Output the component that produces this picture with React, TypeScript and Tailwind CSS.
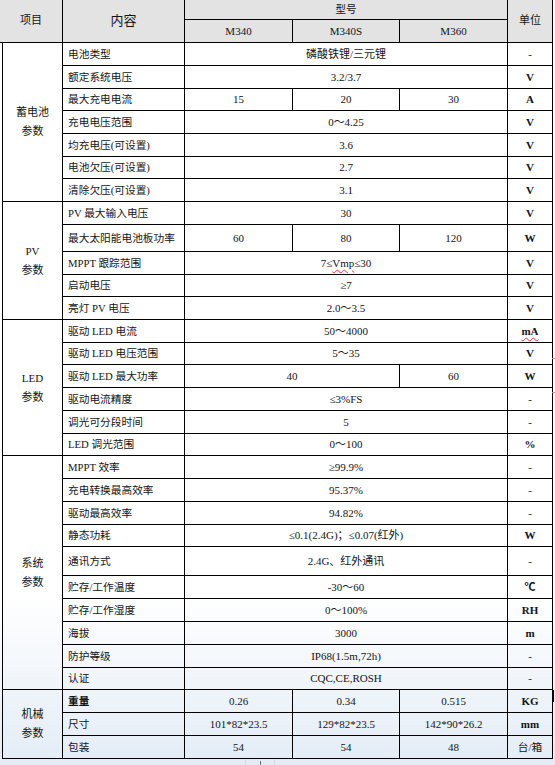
import React from "react";

const cell = "flex items-center justify-center border-r border-b border-black text-center whitespace-nowrap";
const font = "font-['Liberation_Serif','Noto_Sans_CJK_SC',serif]";

function C({ children, className = "" }: { children?: React.ReactNode; className?: string }) {
  return <div className={`${cell} ${className}`}>{children}</div>;
}

function Label({ children, bold = false }: { children: React.ReactNode; bold?: boolean }) {
  return (
    <div
      className={`flex items-center justify-start border-r border-b border-black pl-[5px] whitespace-nowrap text-[10.7px] ${
        bold ? "font-bold" : ""
      }`}
    >
      {children}
    </div>
  );
}

function Unit({ children }: { children: React.ReactNode }) {
  return <div className={`${cell} font-bold text-[11px]`}>{children}</div>;
}

function Section({ lines, className }: { lines: [string, string]; className: string }) {
  return (
    <div
      className={`ml-[2px] flex flex-col items-center justify-center border-l border-r border-b border-black text-[11px] leading-[19px] ${className}`}
    >
      <span>{lines[0]}</span>
      <span>{lines[1]}</span>
    </div>
  );
}

export default function App() {
  return (
    <div className="relative w-[555px] h-[765px] overflow-hidden bg-gradient-to-b from-white from-[78%] to-[#e3ecf6] text-[#141414]">
      <div
        className={`grid w-fit ${font} text-[11px] grid-cols-[63px_122px_108px_107px_108px_45px] grid-rows-[20px_23px_23px_23px_22px_23px_23px_22px_23px_23px_27px_23px_22px_23px_23px_22px_23px_23px_23px_22px_23px_23px_23px_22px_29px_23px_23px_23px_23px_22px_23px_23px_23px]`}
      >
        {/* header */}
        <C className="row-span-2 bg-[#e3e3e3] text-[11px] pb-[2px]">项目</C>
        <C className="row-span-2 bg-[#e3e3e3] text-[13px]">内容</C>
        <C className="col-span-3 bg-[#e3e3e3] text-[10.5px]">型号</C>
        <C className="row-span-2 bg-[#e3e3e3] text-[11px] pb-[2px]">单位</C>
        <C className="bg-[#e3e3e3]">M340</C>
        <C className="bg-[#e3e3e3]">M340S</C>
        <C className="bg-[#e3e3e3]">M360</C>

        {/* battery */}
        <Section lines={["蓄电池", "参数"]} className="row-span-7" />
        <Label>电池类型</Label>
        <C className="col-span-3">磷酸铁锂/三元锂</C>
        <C>-</C>
        <Label>额定系统电压</Label>
        <C className="col-span-3">3.2/3.7</C>
        <Unit>V</Unit>
        <Label>最大充电电流</Label>
        <C>15</C>
        <C>20</C>
        <C>30</C>
        <Unit>A</Unit>
        <Label>充电电压范围</Label>
        <C className="col-span-3">0～4.25</C>
        <Unit>V</Unit>
        <Label>均充电压(可设置)</Label>
        <C className="col-span-3">3.6</C>
        <Unit>V</Unit>
        <Label>电池欠压(可设置)</Label>
        <C className="col-span-3">2.7</C>
        <Unit>V</Unit>
        <Label>清除欠压(可设置)</Label>
        <C className="col-span-3">3.1</C>
        <Unit>V</Unit>

        {/* PV */}
        <Section lines={["PV", "参数"]} className="row-span-5" />
        <Label>PV 最大输入电压</Label>
        <C className="col-span-3">30</C>
        <Unit>V</Unit>
        <Label>最大太阳能电池板功率</Label>
        <C>60</C>
        <C>80</C>
        <C>120</C>
        <Unit>W</Unit>
        <Label>MPPT 跟踪范围</Label>
        <C className="col-span-3">
          7≤<span className="underline decoration-wavy decoration-red-500 decoration-1 underline-offset-2">Vmp</span>≤30
        </C>
        <Unit>V</Unit>
        <Label>启动电压</Label>
        <C className="col-span-3">≥7</C>
        <Unit>V</Unit>
        <Label>亮灯 PV 电压</Label>
        <C className="col-span-3">2.0～3.5</C>
        <Unit>V</Unit>

        {/* LED */}
        <Section lines={["LED", "参数"]} className="row-span-6" />
        <Label>驱动 LED 电流</Label>
        <C className="col-span-3">50～4000</C>
        <Unit>
          <span className="underline decoration-wavy decoration-red-500 decoration-1 underline-offset-2">mA</span>
        </Unit>
        <Label>驱动 LED 电压范围</Label>
        <C className="col-span-3">5～35</C>
        <Unit>V</Unit>
        <Label>驱动 LED 最大功率</Label>
        <C className="col-span-2">40</C>
        <C>60</C>
        <Unit>W</Unit>
        <Label>驱动电流精度</Label>
        <C className="col-span-3">≤3%FS</C>
        <C>-</C>
        <Label>调光可分段时间</Label>
        <C className="col-span-3">5</C>
        <C>-</C>
        <Label>LED 调光范围</Label>
        <C className="col-span-3">0～100</C>
        <Unit>%</Unit>

        {/* system */}
        <Section lines={["系统", "参数"]} className="row-span-10" />
        <Label>MPPT 效率</Label>
        <C className="col-span-3">≥99.9%</C>
        <C>-</C>
        <Label>充电转换最高效率</Label>
        <C className="col-span-3">95.37%</C>
        <C>-</C>
        <Label>驱动最高效率</Label>
        <C className="col-span-3">94.82%</C>
        <C>-</C>
        <Label>静态功耗</Label>
        <C className="col-span-3">≤0.1(2.4G)；≤0.07(红外)</C>
        <Unit>W</Unit>
        <Label>通讯方式</Label>
        <C className="col-span-3">2.4G、红外通讯</C>
        <C>-</C>
        <Label>贮存/工作温度</Label>
        <C className="col-span-3">-30～60</C>
        <Unit>℃</Unit>
        <Label>贮存/工作湿度</Label>
        <C className="col-span-3">0～100%</C>
        <Unit>RH</Unit>
        <Label>海拔</Label>
        <C className="col-span-3">3000</C>
        <Unit>m</Unit>
        <Label>防护等级</Label>
        <C className="col-span-3">IP68(1.5m,72h)</C>
        <C>-</C>
        <Label>认证</Label>
        <C className="col-span-3">CQC,CE,ROSH</C>
        <C>-</C>

        {/* mechanical */}
        <Section lines={["机械", "参数"]} className="row-span-3" />
        <Label bold>重量</Label>
        <C>0.26</C>
        <C>0.34</C>
        <C>0.515</C>
        <Unit>KG</Unit>
        <Label>尺寸</Label>
        <C>101*82*23.5</C>
        <C>129*82*23.5</C>
        <C>142*90*26.2</C>
        <Unit>mm</Unit>
        <Label>包装</Label>
        <C>54</C>
        <C>54</C>
        <C>48</C>
        <C className="text-[10.7px]">台/箱</C>
      </div>

      {/* small artifacts on the right edge and bottom */}
      <div className="absolute left-[552px] top-[690px] h-[12px] w-[2px] bg-black" />
      <div className="absolute left-[552px] top-[358px] h-px w-[3px] bg-gray-400" />
      <div className="absolute left-[552px] top-[392px] h-px w-[3px] bg-gray-400" />
      <div className="absolute left-[245px] top-[760px] h-[5px] w-px bg-gray-300" />
      <div className="absolute left-[260px] top-[761px] h-[4px] w-px bg-gray-500" />
      <div className="absolute left-[274px] top-[760px] h-[5px] w-px bg-gray-300" />
    </div>
  );
}
